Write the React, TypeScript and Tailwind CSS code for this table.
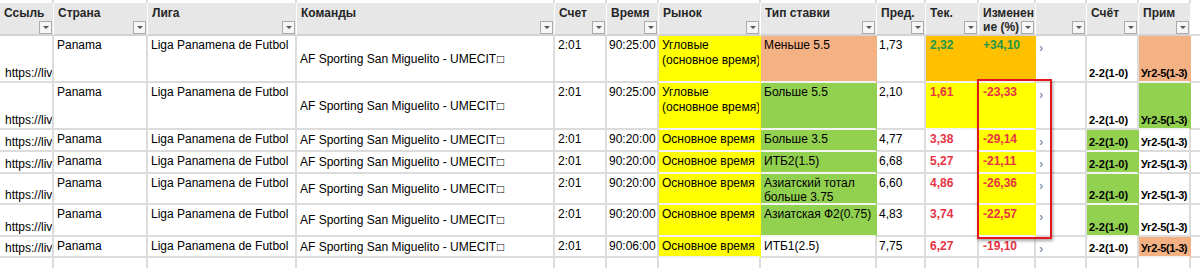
import React from "react";

const WHITE = "bg-white border-r-[#dcdcdc] border-b-[#dcdcdc]";
const YEL = "bg-[#ffff00] border-r-[#ffff00] border-b-[#f3f3f3]";
const GRN = "bg-[#92d050] border-r-[#92d050] border-b-[#f3f3f3]";
const SAL = "bg-[#f4b183] border-r-[#f4b183] border-b-[#f3f3f3]";
const ORG = "bg-[#ffc000] border-r-[#ffc000] border-b-[#f3f3f3]";

const RED = "text-[#e63445]";
const GREEN = "text-[#23964a]";

const cols = [
  { key: "link", w: "w-[54px]", title: "Ссыль" },
  { key: "country", w: "w-[94px]", title: "Страна" },
  { key: "league", w: "w-[149px]", title: "Лига" },
  { key: "teams", w: "w-[258px]", title: "Команды" },
  { key: "score", w: "w-[52px]", title: "Счет" },
  { key: "time", w: "w-[52px]", title: "Время" },
  { key: "market", w: "w-[102px]", title: "Рынок" },
  { key: "bet", w: "w-[116px]", title: "Тип ставки" },
  { key: "pred", w: "w-[49px]", title: "Пред." },
  { key: "tek", w: "w-[53px]", title: "Тек." },
  { key: "chg", w: "w-[57px]", title: "" },
  { key: "arrow", w: "w-[51px]", title: "" },
  { key: "res", w: "w-[52px]", title: "Счёт" },
  { key: "prim", w: "w-[52px]", title: "Прим" },
];

type Row = {
  h: string;
  time: string;
  market: React.ReactNode;
  bet: React.ReactNode;
  betBg: string;
  pred: string;
  tek: string;
  tekBg: string;
  tekColor: string;
  chg: string;
  chgBg: string;
  chgColor: string;
  resBg: string;
  primBg: string;
};

const corners = (
  <>
    Угловые
    <br />
    (основное время)
  </>
);

const rows: Row[] = [
  {
    h: "h-[47px]",
    time: "90:25:00",
    market: corners,
    bet: "Меньше 5.5",
    betBg: SAL,
    pred: "1,73",
    tek: "2,32",
    tekBg: ORG,
    tekColor: GREEN,
    chg: "+34,10",
    chgBg: ORG,
    chgColor: GREEN,
    resBg: WHITE,
    primBg: SAL,
  },
  {
    h: "h-[47px]",
    time: "90:25:00",
    market: corners,
    bet: "Больше 5.5",
    betBg: GRN,
    pred: "2,10",
    tek: "1,61",
    tekBg: YEL,
    tekColor: RED,
    chg: "-23,33",
    chgBg: YEL,
    chgColor: RED,
    resBg: WHITE,
    primBg: GRN,
  },
  {
    h: "h-[22px]",
    time: "90:20:00",
    market: "Основное время",
    bet: "Больше 3.5",
    betBg: GRN,
    pred: "4,77",
    tek: "3,38",
    tekBg: WHITE,
    tekColor: RED,
    chg: "-29,14",
    chgBg: YEL,
    chgColor: RED,
    resBg: GRN,
    primBg: WHITE,
  },
  {
    h: "h-[22px]",
    time: "90:20:00",
    market: "Основное время",
    bet: "ИТБ2(1.5)",
    betBg: GRN,
    pred: "6,68",
    tek: "5,27",
    tekBg: WHITE,
    tekColor: RED,
    chg: "-21,11",
    chgBg: YEL,
    chgColor: RED,
    resBg: GRN,
    primBg: WHITE,
  },
  {
    h: "h-[31px]",
    time: "90:20:00",
    market: "Основное время",
    bet: (
      <>
        Азиатский тотал
        <br />
        больше 3.75
      </>
    ),
    betBg: GRN,
    pred: "6,60",
    tek: "4,86",
    tekBg: WHITE,
    tekColor: RED,
    chg: "-26,36",
    chgBg: YEL,
    chgColor: RED,
    resBg: GRN,
    primBg: WHITE,
  },
  {
    h: "h-[32px]",
    time: "90:20:00",
    market: "Основное время",
    bet: "Азиатская Ф2(0.75)",
    betBg: GRN,
    pred: "4,83",
    tek: "3,74",
    tekBg: WHITE,
    tekColor: RED,
    chg: "-22,57",
    chgBg: YEL,
    chgColor: RED,
    resBg: GRN,
    primBg: WHITE,
  },
  {
    h: "h-[21px]",
    time: "90:06:00",
    market: "Основное время",
    bet: "ИТБ1(2.5)",
    betBg: WHITE,
    pred: "7,75",
    tek: "6,27",
    tekBg: WHITE,
    tekColor: RED,
    chg: "-19,10",
    chgBg: WHITE,
    chgColor: RED,
    resBg: WHITE,
    primBg: SAL,
  },
];

function Cell({
  w,
  tone = WHITE,
  className = "",
  children,
}: {
  w: string;
  tone?: string;
  className?: string;
  children?: React.ReactNode;
}) {
  return (
    <div
      className={`${w} ${tone} shrink-0 h-full border-b-2 border-r-2 px-[3px] flex overflow-hidden whitespace-nowrap ${className}`}
    >
      {children}
    </div>
  );
}

function Filter() {
  return (
    <div className="w-[13px] h-[13px] shrink-0 border border-[#ababab] bg-[#f6f6f6] flex items-center justify-center">
      <div className="w-0 h-0 border-l-[3px] border-r-[3px] border-t-[3px] border-l-transparent border-r-transparent border-t-[#555]" />
    </div>
  );
}

function Header() {
  return (
    <div className="flex h-[33px]">
      {cols.map((c) => (
        <div
          key={c.key}
          className={`${c.w} shrink-0 h-full bg-[#e7e7e7] border-r border-b-2 border-r-white border-b-[#d2d2d2] pl-[4px] pr-[1px] flex flex-col justify-between font-bold text-[#262626] leading-[14px] pt-[3px]`}
        >
          {c.key === "chg" ? (
            <>
              <span>Изменен</span>
              <div className="flex items-end justify-between">
                <span>ие (%)</span>
                <Filter />
              </div>
            </>
          ) : (
            <>
              <span className="whitespace-nowrap overflow-hidden">{c.title}</span>
              <div className="flex justify-end">
                <Filter />
              </div>
            </>
          )}
        </div>
      ))}
      <div className="flex-1 h-full bg-white border-b-2 border-b-[#dcdcdc]" />
    </div>
  );
}

function Chevron() {
  return <span className="text-[#8d9bb0] font-bold text-[13px] leading-[14px]">›</span>;
}

function DataRow({ r }: { r: Row }) {
  return (
    <div className={`flex ${r.h}`}>
      <Cell w="w-[54px]" className="items-end pb-[1px] pl-[5px] leading-[14px]">
        https://liv
      </Cell>
      <Cell w="w-[94px]" className="items-start pt-[2px] leading-[14px]">
        Panama
      </Cell>
      <Cell w="w-[149px]" className="items-start pt-[2px] leading-[14px]">
        Liga Panamena de Futbol
      </Cell>
      <Cell w="w-[258px]" className="items-center leading-[14px]">
        AF Sporting San Miguelito - UMECIT
        <span className="text-[12px] ml-[1px]">□</span>
      </Cell>
      <Cell w="w-[52px]" className="items-start pt-[2px] leading-[14px]">
        2:01
      </Cell>
      <Cell w="w-[52px]" className="items-start pt-[2px] pl-[2px] leading-[14px]">
        {r.time}
      </Cell>
      <Cell w="w-[102px]" tone={YEL} className="items-start pt-[2px] leading-[15px]">
        <div>{r.market}</div>
      </Cell>
      <Cell w="w-[116px]" tone={r.betBg} className="items-start pt-[2px] leading-[14px]">
        <div>{r.bet}</div>
      </Cell>
      <Cell w="w-[49px]" className="items-start pt-[2px] pl-[2px] leading-[14px]">
        {r.pred}
      </Cell>
      <Cell w="w-[53px]" tone={r.tekBg} className={`items-start pt-[2px] pl-[4px] leading-[14px] font-bold ${r.tekColor}`}>
        {r.tek}
      </Cell>
      <Cell w="w-[57px]" tone={r.chgBg} className={`items-start pt-[2px] pl-[4px] leading-[14px] font-bold ${r.chgColor}`}>
        {r.chg}
      </Cell>
      <Cell w="w-[51px]" className="items-start pt-[5px] pl-[3px]">
        <Chevron />
      </Cell>
      <Cell w="w-[52px]" tone={r.resBg} className="items-end pb-[1px] pl-[2px] text-[11px] leading-[13px] font-bold">
        2-2(1-0)
      </Cell>
      <Cell w="w-[52px]" tone={r.primBg} className="items-end pb-[1px] pl-[2px] text-[11px] leading-[13px] font-bold tracking-[-0.4px]">
        Уг2-5(1-3)
      </Cell>
      <div className="flex-1 h-full bg-white border-b-2 border-b-[#dcdcdc]" />
    </div>
  );
}

function Strip({ h }: { h: string }) {
  return (
    <div className={`flex ${h}`}>
      {cols.map((c) => (
        <div key={c.key} className={`${c.w} shrink-0 h-full bg-white border-r-2 border-r-[#dcdcdc]`} />
      ))}
      <div className="flex-1 h-full bg-white" />
    </div>
  );
}

export default function App() {
  return (
    <div className="relative w-[1200px] h-[268px] overflow-hidden bg-white text-black text-[12px] font-['Liberation_Sans',Arial,sans-serif]">
      <Strip h="h-[3px]" />
      <Header />
      {rows.map((r, i) => (
        <DataRow key={i} r={r} />
      ))}
      <Strip h="h-[20px]" />

      {/* red frame drawn over the change column */}
      <div className="absolute left-[977px] top-[79px] w-[75px] h-[160px] border-2 border-[#e3161d] shadow-[1px_2px_3px_rgba(0,0,0,0.35)] pointer-events-none" />
    </div>
  );
}
